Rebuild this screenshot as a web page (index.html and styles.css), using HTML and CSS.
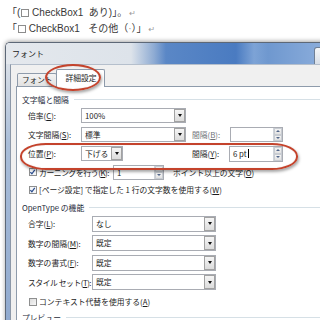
FILE: index.html
```html
<!DOCTYPE html>
<html lang="ja">
<head>
<meta charset="utf-8">
<link rel="stylesheet" href="styles.css">
</head>
<body>
<div class="doc">
  <p class="line">「(<span class="cb"></span> CheckBox1  あり)」。<span class="ret">↵</span></p>
  <p class="line">「<span class="cb"></span> CheckBox1   その他（<span class="dot">·</span>）」<span class="ret">↵</span></p>
</div>
<div class="dialog">
  <div class="titlebar"><span class="title">フォント</span><span class="tbtn"></span></div>
  <div class="fbody">
    <div class="lframe"></div>
    <div class="client">
      <div class="tabs">
        <span class="tab">フォント</span>
        <span class="tab active">詳細設定</span>
      </div>
      <div class="panel">
        <div class="gtitle">文字幅と間隔</div>
        <div class="row">
          <span class="lbl">倍率(<u>C</u>):</span>
          <span class="cell"><span class="sel w105"><span class="val">100%</span><span class="dd"></span></span></span>
        </div>
        <div class="row">
          <span class="lbl">文字間隔(<u>S</u>):</span>
          <span class="cell"><span class="sel w105"><span class="val">標準</span><span class="dd"></span></span></span>
          <span class="lbl2 off">間隔(<u>B</u>):</span>
          <span class="spin w53"><span class="val"></span><span class="arrows"><i class="up"></i><i class="dn"></i></span></span>
        </div>
        <div class="row r3">
          <span class="lbl">位置(<u>P</u>):</span>
          <span class="cell"><span class="sel w42"><span class="val">下げる</span><span class="dd"></span></span></span>
          <span class="lbl2">間隔(<u>Y</u>):</span>
          <span class="spin w54 tall"><span class="val">6 pt<span class="caret"></span></span><span class="arrows"><i class="up"></i><i class="dn"></i></span></span>
        </div>
        <div class="row crow">
          <span class="chk on"><svg viewBox="0 0 8 8" width="8" height="8"><path d="M1.5 4.2 L3.3 6 L6.6 1.6" fill="none" stroke="#2a4d8f" stroke-width="1.4"/></svg></span>
          <span class="klbl">カーニングを行う(<u>K</u>):</span>
          <span class="spin w51"><span class="val">1</span><span class="arrows"><i class="up"></i><i class="dn"></i></span></span>
          <span class="after">ポイント以上の文字(<u>O</u>)</span>
        </div>
        <div class="row crow r5">
          <span class="chk on"><svg viewBox="0 0 8 8" width="8" height="8"><path d="M1.5 4.2 L3.3 6 L6.6 1.6" fill="none" stroke="#2a4d8f" stroke-width="1.4"/></svg></span>
          <span class="ctext">[ページ設定] で指定した 1 行の文字数を使用する(<u>W</u>)</span>
        </div>
        <div class="gtitle g2">OpenType の機能</div>
        <div class="row o">
          <span class="lbl wide">合字(<u>L</u>):</span>
          <span class="sel w124"><span class="val">なし</span><span class="dd"></span></span>
        </div>
        <div class="row o">
          <span class="lbl wide">数字の間隔(<u>M</u>):</span>
          <span class="sel w124"><span class="val">既定</span><span class="dd"></span></span>
        </div>
        <div class="row o">
          <span class="lbl wide">数字の書式(<u>F</u>):</span>
          <span class="sel w124"><span class="val">既定</span><span class="dd"></span></span>
        </div>
        <div class="row o">
          <span class="lbl wide tight">スタイル セット(<u>T</u>):</span>
          <span class="sel w124"><span class="val">既定</span><span class="dd"></span></span>
        </div>
        <div class="row crow r6">
          <span class="chk"></span>
          <span class="ctext">コンテキスト代替を使用する(<u>A</u>)</span>
        </div>
        <div class="gtitle g3">プレビュー</div>
      </div>
    </div>
  </div>
</div>
<div class="ring ring-tab"></div>
<div class="ring ring-row"></div>
</body>
</html>
```
FILE: styles.css
```css
* { box-sizing: border-box; }
html, body { margin: 0; padding: 0; }
body {
  width: 320px;
  height: 320px;
  overflow: hidden;
  position: relative;
  background: #fff;
  font-family: "Liberation Sans", "Noto Sans CJK JP", sans-serif;
}

.doc {
  height: 42px;
  padding: 5px 0 0 7px;
  font-size: 10px;
  color: #383838;
}
.line {
  margin: 0;
  height: 16px;
  line-height: 16px;
  white-space: pre;
}
.cb {
  display: inline-block;
  width: 8px;
  height: 8px;
  border: 1px solid #8c8c8c;
  background: #fff;
  vertical-align: -1px;
  margin-left: 1px;
}
.ret { color: #9a9a9a; font-size: 8px; font-family: "DejaVu Sans", sans-serif; margin-left: 2px; }
.dot { color: #999; }

.dialog {
  width: 340px;
  height: 290px;
  margin-left: 5px;
  border: 1px solid #5d6877;
  border-right: none;
  border-bottom: none;
  border-radius: 5px 0 0 0;
  box-shadow: 0 -1px 4px rgba(0, 0, 0, 0.35);
  display: flex;
  flex-direction: column;
  font-family: "Noto Sans CJK JP", "Liberation Sans", sans-serif;
  font-size: 7.8px;
  color: #1c1c1c;
}
.titlebar {
  height: 21px;
  flex: none;
  display: flex;
  align-items: center;
  justify-content: space-between;
  padding: 0 6px 0 6px;
  border-radius: 4px 0 0 0;
  background: linear-gradient(90deg, #e4e8ed 0, #dde3ea 125px, #8eabd3 148px, #5a87c6 160px, #4a7bc1 230px, #7da3d6 248px, #6f98cf 262px, #93b3df 334px);
}
.title { font-size: 8px; color: #1a1a1a; }
.tbtn {
  width: 25px;
  height: 17px;
  align-self: flex-end;
  border: 1px solid #6f7f95;
  border-bottom: none;
  border-radius: 3px 3px 0 0;
  background: linear-gradient(#f4f6f9, #d8dee7);
}
.fbody { flex: 1; display: flex; }
.lframe {
  width: 4px;
  flex: none;
  background: linear-gradient(#d9dfe7, #a9bdd8 30%, #8fa9cf);
}
.client {
  flex: 1;
  background: #f0f0f0;
  border-left: 1px solid #8c98a8;
  border-top: 1px solid #b5bfcc;
  padding: 3px 0 0 5px;
  display: flex;
  flex-direction: column;
}
.tabs {
  display: flex;
  align-items: flex-end;
  height: 18px;
  margin-left: 1px;
  flex: none;
}
.tab {
  height: 13px;
  padding: 0 4px;
  border: 1px solid #8e9bab;
  border-bottom: none;
  border-radius: 2px 2px 0 0;
  background: linear-gradient(#f3f3f3, #e1e1e1);
  line-height: 12px;
  font-size: 7.6px;
}
.tab.active {
  height: 18px;
  padding: 0 7px 0 8px;
  background: #fff;
  margin-left: -1px;
  margin-bottom: -1px;
  line-height: 16px;
  position: relative;
  z-index: 1;
  font-size: 7.8px;
}
.panel {
  flex: 1;
  background: #fff;
  border: 1px solid #8e9bab;
  border-right: none;
  padding: 5px 0 0 5px;
}
.gtitle {
  height: 14px;
  display: flex;
  align-items: center;
  color: #1d2a3a;
}
.gtitle::after {
  content: "";
  flex: 1;
  height: 1px;
  margin-left: 5px;
  background: #d6e0e6;
}
.g2 { margin-top: 2px; }
.g3 { margin-top: 0; }

.row {
  height: 19px;
  display: flex;
  align-items: center;
  padding-left: 6px;
}
.row.o { height: 19.5px; }
.row:first-of-type { margin-top: 2px; }
.lbl { width: 53px; flex: none; white-space: nowrap; }
.lbl.wide { width: 64px; }
.lbl.tight { letter-spacing: -0.45px; }
.cell { width: 105px; flex: none; display: flex; }
.lbl2 { width: 38px; margin-left: 6px; flex: none; }
.lbl2.off { color: #6f7378; }

.sel {
  height: 15px;
  display: flex;
  border: 1px solid #a9acb3;
  background: #fff;
  flex: none;
}
.w105 { width: 105px; }
.w42 { width: 42px; }
.w124 { width: 124px; height: 16px; }
.val { flex: 1; padding-left: 3px; line-height: 13px; white-space: nowrap; overflow: hidden; }
.dd {
  width: 11px;
  flex: none;
  border: 1px solid #a2a2a2;
  margin: 0;
  background: linear-gradient(#f5f5f5, #dcdcdc);
  display: flex;
  align-items: center;
  justify-content: center;
}
.dd::after {
  content: "";
  border-left: 2.5px solid transparent;
  border-right: 2.5px solid transparent;
  border-top: 3px solid #111;
}

.spin {
  height: 15px;
  display: flex;
  border: 1px solid #a9acb3;
  background: #fff;
  flex: none;
}
.spin.tall { height: 16px; }
.w53 { width: 53px; }
.w54 { width: 54px; margin-left: -1px; }
.w51 { width: 51px; }
.arrows {
  width: 9px;
  flex: none;
  display: flex;
  flex-direction: column;
  border-left: 1px solid #d0d4da;
}
.arrows i {
  flex: 1;
  background: linear-gradient(#f4f4f4, #e2e2e2);
  display: flex;
  align-items: center;
  justify-content: center;
  border: 1px solid #c8ccd2;
}
.arrows i.up::after {
  content: "";
  border-left: 2px solid transparent;
  border-right: 2px solid transparent;
  border-bottom: 2px solid #52668a;
}
.arrows i.dn::after {
  content: "";
  border-left: 2px solid transparent;
  border-right: 2px solid transparent;
  border-top: 2px solid #52668a;
}
.caret { display: inline-block; width: 1px; height: 9px; background: #000; vertical-align: -1px; margin-left: 1px; }

.crow { padding-left: 7px; }
.row.crow { height: 18px; }
.row.r5 { height: 17px; }
.row.r6 { height: 17px; margin-top: 1px; }
.chk {
  width: 8px;
  height: 8px;
  flex: none;
  border: 1px solid #8e8f8f;
  background: linear-gradient(135deg, #dcdcdc, #f7f7f7);
  display: flex;
  margin-right: 2px;
}
.chk.on { background: #f4f6f8; }
.chk svg { margin: -1px 0 0 -1px; }
.klbl { width: 74px; flex: none; white-space: nowrap; letter-spacing: -0.4px; }
.after { margin-left: 9px; white-space: nowrap; }
.ctext { white-space: nowrap; }

.ring {
  position: absolute;
  border: 2.5px solid #c4432c;
  box-shadow: 1px 2px 3px rgba(0, 0, 0, 0.35), inset 0 0 1px rgba(120, 30, 10, 0.3);
}
.ring-tab {
  left: 45px;
  top: 64px;
  width: 56px;
  height: 27px;
  border-radius: 50%;
  z-index: 3;
}
.ring-row {
  left: 20px;
  top: 143px;
  width: 278px;
  height: 27px;
  border-radius: 26px / 13px;
}
```
